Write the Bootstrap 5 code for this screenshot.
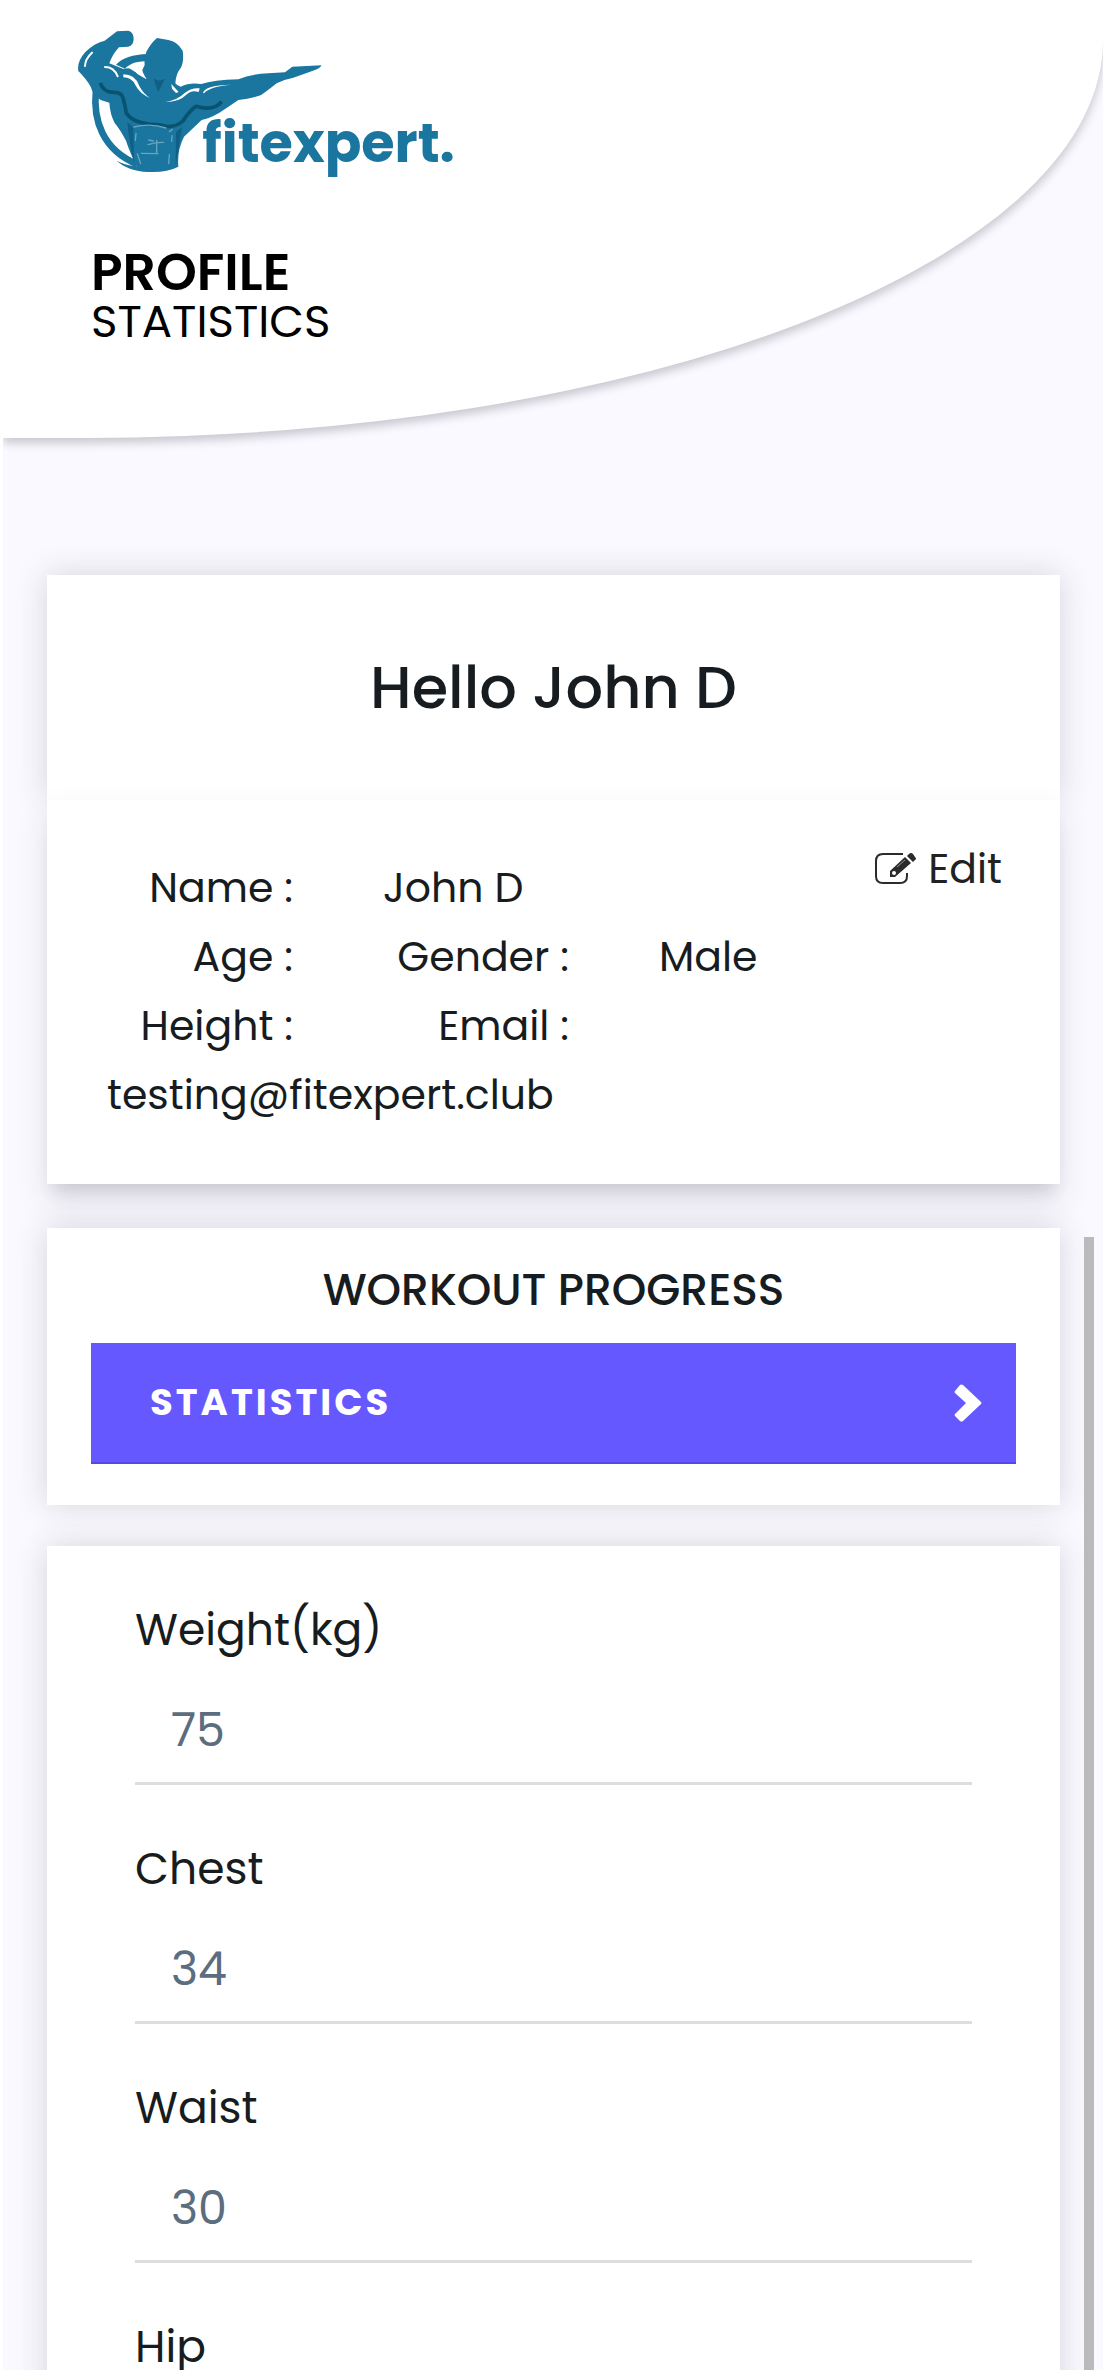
<!DOCTYPE html>
<html lang="en">
<head>
<meta charset="utf-8">
<meta name="viewport" content="width=device-width, initial-scale=1">
<title>fitexpert – Profile statistics</title>
<link href="https://cdn.jsdelivr.net/npm/bootstrap@5.3.0/dist/css/bootstrap.min.css" rel="stylesheet">
<style>
  body { font-family: Poppins, Inter, "Open Sans", sans-serif; font-size: 41px; line-height: 69px; color: #171c20; background: #fff; }
  .app-shell { background: #faf9ff; margin: 0 3px; }
  .top-sheet { background: #fff; height: 438px; padding: 10px 0 0 57px; border-bottom-right-radius: 1018px 398px; box-shadow: 0 5px 10px rgba(40, 38, 50, .24); clip-path: inset(0 0 -30px 0); }
  .brand-logo { display: block; width: 410px; height: 180px; }
  .page-title { color: #000; padding: 57px 0 0 31px; }
  .page-title h1 { font-size: 52px; line-height: 50px; font-weight: 600; margin: 0; }
  .page-title p { font-size: 45px; line-height: 50px; font-weight: 400; margin: 0; }
  .content-stack { padding: 137px 43px 0 44px; }
  .panel { background: #fff; box-shadow: 0 0 30px rgba(50, 50, 60, .18); }
  .greeting { padding: 79px 0 78px; }
  .greeting h2 { font-size: 59px; line-height: 68px; font-weight: 500; margin: 0; }
  .details { position: relative; padding: 53px 60px 55px; box-shadow: 0 16px 30px rgba(50, 50, 60, .13), 0 14px 14px -6px rgba(60, 60, 60, .12); }
  .details dl { margin: 0; }
  .details dt { font-weight: 400; width: 186px; margin-right: 90px; text-align: right; white-space: nowrap; }
  .details dd { margin: 0; }
  .edit-link { color: #222; text-decoration: none; position: absolute; top: 34px; right: 58px; gap: 11px; }
  .edit-link svg { width: 42px; height: 34px; }
  .progress-panel { margin-top: 44px; padding: 28px 44px 41px; }
  .progress-panel h3 { font-size: 44px; line-height: 68px; font-weight: 500; margin: 0 0 19px; }
  .stat-btn { background: #6558ff; color: #fff; border: 0; border-bottom: 2px solid #5548e6; border-radius: 0; height: 121px; padding: 0 34px 0 59px; font-size: 37px; font-weight: 700; letter-spacing: 3px; }
  .stat-btn:hover { background: #584ae8; color: #fff; }
  .stat-btn svg { width: 28px; height: 38px; }
  .measure-panel { margin-top: 41px; padding: 50px 88px 60px; }
  .measure { margin-bottom: 50px; }
  .measure label { display: block; font-size: 44px; line-height: 68px; }
  .measure input { font-size: 46px; line-height: 60px; color: #5b6d7e; height: 104px; margin-top: 17px; padding: 0 36px 2px; border: 0; border-bottom: 3px solid #ddd; border-radius: 0; background: none; }
  .scroll-thumb { position: fixed; top: 1237px; bottom: 0; right: 12px; width: 10px; background: #bababc; }
</style>
</head>
<body class="vh-100 overflow-hidden">
<div class="app-shell">
  <header class="top-sheet">
    <svg class="brand-logo" viewBox="0 0 1230 540" role="img" aria-label="fitexpert">
      <path fill="none" stroke="#1a759f" stroke-width="20" d="M108 240C98 330 128 420 232 463"/>
      <path fill="#1a759f" d="M170 452C205 470 235 468 270 475L265 486C225 484 190 472 170 452Z"/>
      <path fill="#1a759f" d="M168 164C185 145 220 133 262 132L255 154C225 154 205 165 195 176Z"/>
      <path fill="#1a759f" d="M171 64L205 62Q221 65 221 88Q220 108 205 110L177 112Q158 132 148 160L190 177Q218 168 232 192L260 208Q247 194 247 180L254 165Q252 145 259 125Q274 98 291 84L325 90Q352 94 368 122Q373 158 360 177Q348 192 346 220Q352 228 362 230Q390 216 424 222Q460 210 535 208Q570 192 625 190L675 187L697 170L784 166Q784 172 765 180L700 203Q672 208 650 220Q620 244 602 256Q570 266 535 270Q500 294 477 309Q447 326 425 330L372 380Q351 420 355 470Q320 488 268 486L235 478Q210 430 198 392Q180 358 164 339Q150 312 148 278L122 270Q99 255 92 230Q80 208 55 183Q50 155 76 126Q105 98 134 92Z"/>
      <path fill="#fff" d="M203 172L228 168L246 164L246 182L259 207L232 190Z"/>
      <path fill="none" stroke="#fff" stroke-width="6" stroke-linecap="round" d="M75 168Q76 146 96 128M135 171Q162 171 173 199"/>
      <path fill="#fff" d="M190 193Q226 193 238 228Q250 251 270 264Q239 251 226 225Q215 202 190 202ZM316 276Q352 271 373 250Q394 232 419 235L416 246Q394 238 378 255Q358 276 316 276ZM429 250Q430 226 515 224Q448 230 433 249ZM334 222L356 246L348 249L336 236Z"/>
      <path fill="none" stroke="#08536f" stroke-width="11" stroke-linejoin="round" d="M121 219Q130 247 160 247Q185 246 189 263Q196 288 199 309Q215 336 270 343Q300 341 322 350Q350 350 369 333Q387 304 408 289Q460 305 485 275"/>
      <path fill="#105f85" d="M281 206L296 212L315 207L294 246ZM202 335L220 354L222 458Q208 400 202 335ZM348 365L366 352L353 430L347 465Z"/>
      <path fill="none" stroke="#67a5c1" stroke-width="4" stroke-linecap="round" d="M222 351Q270 338 318 354M228 370L226 391M328 365L337 359M336 377L335 394M266 390L280 393M290 391L290 410M264 404Q290 396 311 397M244 430L294 431M290 413L290 431M232 431L242 461M328 433L326 461"/>
      <text x="427" y="457" fill="#1a759f" font-family="Poppins, Lato, sans-serif" font-weight="700" font-size="162">fitexpert.</text>
    </svg>
    <div class="page-title">
      <h1>PROFILE</h1>
      <p>STATISTICS</p>
    </div>
  </header>

  <main class="content-stack">
    <section class="panel greeting text-center"><h2>Hello John D</h2></section>

    <section class="panel details">
      <a class="edit-link d-inline-flex align-items-center" href="#edit">
        <svg viewBox="0 0 42 34" fill="none" aria-hidden="true">
          <path d="M28 2H8Q1 2 1 9V24Q1 31 8 31H25Q32 31 32 24V21" stroke="#2b2b2b" stroke-width="2"/>
          <path d="M15 19L30 5L36 11L20 25H15Z" fill="#2b2b2b"/>
          <path d="M32 4L34 2Q36 0 38 2L40 5Q42 7 40 8L38 10Z" fill="#2b2b2b"/>
          <circle cx="19" cy="21" r="2" fill="#fff"/>
          <path d="M22 15L30 8" stroke="#999" stroke-width="1"/>
        </svg>
        <span>Edit</span>
      </a>
      <dl>
        <div class="d-flex"><dt>Name :</dt><dd>John D</dd></div>
        <div class="d-flex"><dt>Age :</dt><dd></dd><dt>Gender :</dt><dd>Male</dd></div>
        <div class="d-flex flex-wrap"><dt>Height :</dt><dd></dd><dt>Email :</dt><dd class="w-100">testing@fitexpert.club</dd></div>
      </dl>
    </section>

    <section class="panel progress-panel">
      <h3 class="text-center">WORKOUT PROGRESS</h3>
      <button type="button" class="btn stat-btn w-100 d-flex align-items-center justify-content-between">
        <span>STATISTICS</span>
        <svg viewBox="0 0 28 38" aria-hidden="true"><path d="M1 7L6 1Q7 0 9 1L27 18Q28 19 27 20L9 37Q7 38 6 37L1 32Q0 31 1 30L12 19L1 9Q0 8 1 7Z" fill="#fff"/></svg>
      </button>
    </section>

    <form class="panel measure-panel">
      <div class="measure"><label for="weight">Weight(kg)</label><input class="form-control shadow-none" id="weight" type="text" inputmode="numeric" value="75"></div>
      <div class="measure"><label for="chest">Chest</label><input class="form-control shadow-none" id="chest" type="text" inputmode="numeric" value="34"></div>
      <div class="measure"><label for="waist">Waist</label><input class="form-control shadow-none" id="waist" type="text" inputmode="numeric" value="30"></div>
      <div class="measure"><label for="hip">Hip</label><input class="form-control shadow-none" id="hip" type="text" inputmode="numeric"></div>
    </form>
  </main>
</div>
<div class="scroll-thumb" aria-hidden="true"></div>
<script src="https://cdn.jsdelivr.net/npm/bootstrap@5.3.0/dist/js/bootstrap.bundle.min.js"></script>
</body>
</html>
